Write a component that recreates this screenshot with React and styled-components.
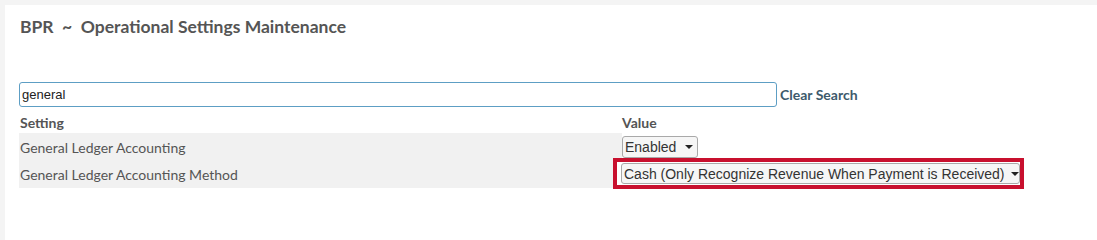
import React from 'react';
import styled, { createGlobalStyle } from 'styled-components';

const GlobalStyle = createGlobalStyle`
  html, body {
    margin: 0;
    padding: 0;
    background: #f4f4f4;
  }
`;

const Page = styled.div`
  min-height: 100vh;
  padding: 5px 0 0 5px;
  box-sizing: border-box;
  display: flex;
  flex-direction: column;
  background: #f4f4f4;
`;

const Panel = styled.div`
  flex: 1;
  background: #fff;
  padding: 11px 0 0 14px;
  box-sizing: border-box;
`;

const Title = styled.h1`
  margin: 0 0 0 1px;
  font-family: Lato, "Open Sans", sans-serif;
  font-size: 17.5px;
  font-weight: 700;
  line-height: 22px;
  color: #555;
`;

const SearchRow = styled.div`
  display: flex;
  align-items: center;
  margin-top: 44px;
`;

const SearchInput = styled.input`
  width: 758px;
  height: 25px;
  box-sizing: border-box;
  border: 1px solid #5d9ec4;
  border-radius: 3px;
  padding: 0 2px;
  font-family: "Liberation Sans", Arial, sans-serif;
  font-size: 13px;
  color: #222;
  outline: none;
`;

const ClearLink = styled.a`
  margin-left: 3px;
  margin-top: -1px;
  font-family: Lato, "Open Sans", sans-serif;
  font-size: 14px;
  font-weight: 700;
  color: #3d5a6c;
  text-decoration: none;
  cursor: pointer;
`;

const Table = styled.div`
  display: grid;
  grid-template-columns: 603px 1fr;
  margin-top: 6px;
  font-family: Lato, "Open Sans", sans-serif;
  font-size: 14px;
  color: #555;
`;

const HeadCell = styled.div`
  font-weight: 700;
  height: 20px;
  line-height: 20px;
  padding-left: ${(p) => (p.value ? 0 : 1)}px;
`;

const SettingCell = styled.div`
  background: #f1f1f1;
  height: ${(p) => p.h}px;
  display: flex;
  align-items: center;
  padding-left: 1px;
`;

const ValueCell = styled.div`
  height: ${(p) => p.h}px;
  display: flex;
  align-items: center;
`;

const Highlight = styled.div`
  display: inline-flex;
  margin-left: -9px;
  margin-top: -2px;
  padding: 1px 0 1px 4px;
  background: #fff;
  border: 4px solid #c8102e;
`;

const SelectBox = styled.div`
  display: inline-flex;
  align-items: center;
  box-sizing: border-box;
  width: ${(p) => p.w}px;
  height: ${(p) => p.h}px;
  padding: 0 4px 0 2px;
  border: 1px solid #a9a9a9;
  border-radius: 3px;
  background: #f6f6f6;
  font-family: "Liberation Sans", Arial, sans-serif;
  font-size: 14px;
  color: #333;
`;

const SelectText = styled.span`
  flex: 1;
  white-space: nowrap;
`;

const Caret = styled.span`
  flex: none;
  margin-left: 6px;
  width: 0;
  height: 0;
  border-left: 4px solid transparent;
  border-right: 4px solid transparent;
  border-top: 4px solid #222;
`;

const rows = [
  { setting: 'General Ledger Accounting', value: 'Enabled', w: 76, sh: 22, h: 28 },
  {
    setting: 'General Ledger Accounting Method',
    value: 'Cash (Only Recognize Revenue When Payment is Received)',
    w: 399,
    sh: 21,
    h: 27,
    highlight: true,
  },
];

export default function App() {
  return (
    <Page>
      <GlobalStyle />
      <Panel>
        <Title>BPR&nbsp; ~&nbsp; Operational Settings Maintenance</Title>
        <SearchRow>
          <SearchInput defaultValue="general" />
          <ClearLink>Clear Search</ClearLink>
        </SearchRow>
        <Table>
          <HeadCell>Setting</HeadCell>
          <HeadCell value>Value</HeadCell>
          {rows.map((r) => {
            const select = (
              <SelectBox w={r.w} h={r.sh}>
                <SelectText>{r.value}</SelectText>
                <Caret />
              </SelectBox>
            );
            return (
              <React.Fragment key={r.setting}>
                <SettingCell h={r.h}>{r.setting}</SettingCell>
                <ValueCell h={r.h}>
                  {r.highlight ? <Highlight>{select}</Highlight> : select}
                </ValueCell>
              </React.Fragment>
            );
          })}
        </Table>
      </Panel>
    </Page>
  );
}
